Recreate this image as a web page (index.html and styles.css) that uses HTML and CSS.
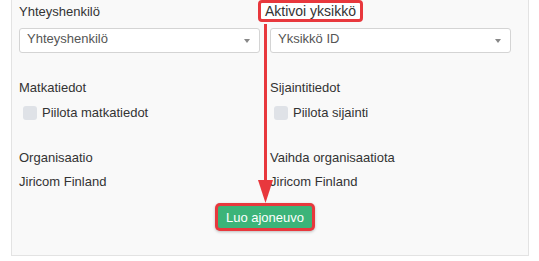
FILE: index.html
```html
<!DOCTYPE html>
<html lang="fi">

<head>
    <meta charset="utf-8">
    <meta name="viewport" content="width=device-width, initial-scale=1.0">
    <title>Luo ajoneuvo</title>
    <link rel="stylesheet" href="styles.css">
</head>

<body>

    <div class="sivu">

        <div class="paneeli">

            <div class="rivi">
                <div class="kentta">
                    <div class="otsikko">Yhteyshenkilö</div>
                    <div class="valinta">Yhteyshenkilö</div>
                </div>
                <div class="kentta">
                    <div class="otsikko"><span class="korostus">Aktivoi yksikkö</span></div>
                    <div class="valinta">Yksikkö ID</div>
                </div>
            </div>

            <div class="rivi vali">
                <div class="kentta">
                    <div class="otsikko">Matkatiedot</div>
                    <label class="valintaruutu"><span class="ruutu"></span>Piilota matkatiedot</label>
                </div>
                <div class="kentta">
                    <div class="otsikko">Sijaintitiedot</div>
                    <label class="valintaruutu"><span class="ruutu"></span>Piilota sijainti</label>
                </div>
            </div>

            <div class="rivi vali">
                <div class="kentta">
                    <div class="otsikko">Organisaatio</div>
                    <div class="arvo">Jiricom Finland</div>
                </div>
                <div class="kentta">
                    <div class="otsikko">Vaihda organisaatiota</div>
                    <div class="arvo">Jiricom Finland</div>
                </div>
            </div>

            <div class="napit">
                <button class="luo">Luo ajoneuvo</button>
            </div>

        </div>

        <!-- nuoli yksiköstä napille -->
        <svg class="nuoli" width="25" height="190" viewBox="0 0 25 190">
            <line x1="10.5" y1="4" x2="10.5" y2="165" stroke="#e8383d" stroke-width="3" />
            <polygon points="3,160 18,160 10.5,183" fill="#e8383d" />
        </svg>

    </div>

</body>

</html>
```

FILE: styles.css
```css
body {
    margin: 0;
    padding: 0;
    background-color: #fff;
    font-family: "Liberation Sans", Arial, sans-serif;
    font-size: 13px;
    line-height: 18px;
    color: #333;
}

.sivu {
    position: relative;
    width: 539px;
    height: 261px;
    overflow: hidden;
}

.paneeli {
    margin: -10px 0 0 11px;
    width: 518px;
    box-sizing: border-box;
    padding: 12px 17px 27px 7px;
    background-color: #f9f9f9;
    border: 1px solid #e3e3e3;
}

.rivi {
    display: grid;
    grid-template-columns: 241px 241px;
    column-gap: 10px;
}

.vali {
    margin-top: 26px;
}

.rivi.vali + .rivi.vali {
    margin-top: 27px;
}

.otsikko {
    position: relative;
    height: 18px;
}

.korostus {
    position: absolute;
    top: -3px;
    left: -12px;
    padding: 1px 4px 0;
    font-size: 14px;
    line-height: 15px;
    white-space: nowrap;
    background-color: #fff;
    border: 3px solid #e8383d;
    border-radius: 4px;
}

.valinta {
    position: relative;
    margin-top: 7px;
    height: 25px;
    box-sizing: border-box;
    padding: 0 7px;
    line-height: 20px;
    color: #555;
    background-color: #fff;
    border: 1px solid #d4d4d4;
    border-radius: 3px;
}

.valinta::after {
    content: "";
    position: absolute;
    right: 9px;
    top: 10px;
    border-left: 3px solid transparent;
    border-right: 3px solid transparent;
    border-top: 4px solid #888;
}

.valintaruutu {
    display: flex;
    align-items: center;
    margin-top: 7px;
    height: 18px;
}

.ruutu {
    width: 14px;
    height: 14px;
    margin: 0 5px 0 4px;
    background-color: #dfe2e7;
    border-radius: 3px;
}

.arvo {
    margin-top: 6px;
}

.napit {
    margin-top: 15px;
    text-align: center;
}

.luo {
    width: 94px;
    height: 22px;
    padding: 0;
    font-family: "Liberation Sans", Arial, sans-serif;
    font-size: 13px;
    color: #fff;
    background-color: #3cb479;
    border: none;
    border-radius: 2px;
    box-shadow: 0 0 0 3px #e8383d, 0 1px 3px 3px rgba(0, 0, 0, 0.25);
}

.nuoli {
    position: absolute;
    left: 255px;
    top: 20px;
}
```
